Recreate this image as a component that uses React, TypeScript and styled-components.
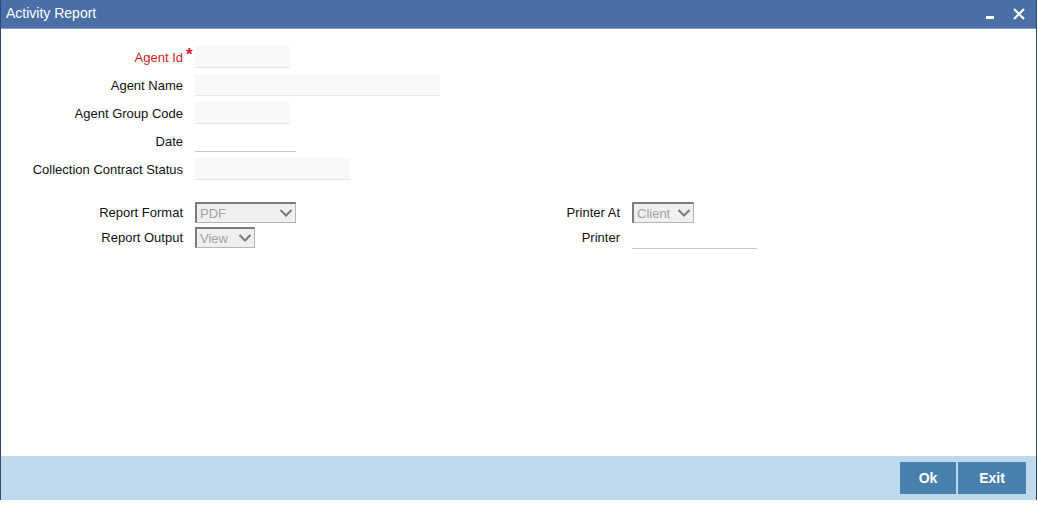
import styled, { createGlobalStyle } from "styled-components";

const GlobalStyle = createGlobalStyle`
  html, body {
    margin: 0;
    padding: 0;
    background: #ffffff;
  }
  body {
    font-family: "Liberation Sans", Arial, sans-serif;
    font-size: 13px;
    color: #000;
  }
`;

const Window = styled.div`
  width: 1035px;
  height: 500px;
  border-left: 1px solid #2c4b7b;
  border-right: 1px solid #2c4b7b;
  display: flex;
  flex-direction: column;
  background: #fff;
`;

const TitleBar = styled.div`
  height: 28px;
  background: #4a6fa6;
  border-bottom: 1px solid #8c9fae;
  display: flex;
  align-items: center;
  justify-content: space-between;
  padding: 0 10px 0 5px;
  color: #fff;
`;

const Title = styled.span`
  font-size: 14px;
  margin-top: -2px;
`;

const Controls = styled.div`
  display: flex;
  align-items: center;
  gap: 17px;
`;

const IconBtn = styled.span`
  display: flex;
  cursor: pointer;
`;

const Content = styled.div`
  flex: 1;
  padding-top: 14px;
`;

const FormGrid = styled.div`
  display: grid;
  grid-template-columns: 182px 1fr;
  grid-auto-rows: 28px;
  column-gap: 12px;
  align-items: center;
`;

const Label = styled.label<{ required?: boolean }>`
  position: relative;
  text-align: right;
  color: ${({ required }) => (required ? "#d21a2a" : "#111")};
  white-space: nowrap;
`;

const Star = styled.span`
  position: absolute;
  left: 100%;
  top: -5px;
  margin-left: 3px;
  color: #d21a2a;
  font-size: 17px;
  font-weight: bold;
`;

const TextBox = styled.div<{ w: number; plain?: boolean }>`
  width: ${({ w }) => w}px;
  height: 22px;
  box-sizing: border-box;
  background: ${({ plain }) => (plain ? "transparent" : "#f8f8f8")};
  border-bottom: 1px solid ${({ plain }) => (plain ? "#c8c8c8" : "#e6e6e6")};
`;

const ReportGrid = styled.div`
  margin-top: 17px;
  display: grid;
  grid-template-columns: 182px 325px 88px auto;
  grid-auto-rows: 25px;
  column-gap: 12px;
  align-items: center;
`;

const Select = styled.div<{ w: number }>`
  width: ${({ w }) => w}px;
  height: 21px;
  box-sizing: border-box;
  border: 1px solid #b4b4b4;
  border-top: 2px solid #7c7c7c;
  border-left: 2px solid #7c7c7c;
  background: #efefef;
  color: #a3a3a3;
  font-size: 13px;
  display: flex;
  align-items: center;
  justify-content: space-between;
  padding: 0 2px 0 3px;
`;

const Footer = styled.div`
  height: 44px;
  background: #bed9ec;
  display: flex;
  justify-content: flex-end;
  align-items: center;
  gap: 2px;
  padding-right: 10px;
`;

const Button = styled.button<{ w: number }>`
  width: ${({ w }) => w}px;
  height: 32px;
  border: none;
  background: #4a80ae;
  color: #fff;
  font-family: "Liberation Sans", Arial, sans-serif;
  font-weight: bold;
  font-size: 14px;
  cursor: pointer;
`;

const Chevron = () => (
  <svg width="14" height="10" viewBox="0 0 14 10">
    <path d="M1.5 2 L7 7.5 L12.5 2" fill="none" stroke="#7a7a7a" strokeWidth="2" />
  </svg>
);

const App = () => {
  return (
    <>
      <GlobalStyle />
      <Window>
        <TitleBar>
          <Title>Activity Report</Title>
          <Controls>
            <IconBtn>
              <svg width="10" height="10" viewBox="0 0 10 10">
                <rect x="1" y="7" width="8" height="3" fill="#fff" />
              </svg>
            </IconBtn>
            <IconBtn>
              <svg width="14" height="14" viewBox="0 0 14 14">
                <path d="M2 2 L12 12 M12 2 L2 12" stroke="#fff" strokeWidth="2.2" />
              </svg>
            </IconBtn>
          </Controls>
        </TitleBar>
        <Content>
          <FormGrid>
            <Label required>
              Agent Id<Star>*</Star>
            </Label>
            <TextBox w={95} />
            <Label>Agent Name</Label>
            <TextBox w={245} />
            <Label>Agent Group Code</Label>
            <TextBox w={95} />
            <Label>Date</Label>
            <TextBox w={101} plain />
            <Label>Collection Contract Status</Label>
            <TextBox w={155} />
          </FormGrid>
          <ReportGrid>
            <Label>Report Format</Label>
            <Select w={101}>
              PDF
              <Chevron />
            </Select>
            <Label>Printer At</Label>
            <Select w={62}>
              Client
              <Chevron />
            </Select>
            <Label>Report Output</Label>
            <Select w={60}>
              View
              <Chevron />
            </Select>
            <Label>Printer</Label>
            <TextBox w={125} plain />
          </ReportGrid>
        </Content>
        <Footer>
          <Button w={56}>Ok</Button>
          <Button w={68}>Exit</Button>
        </Footer>
      </Window>
    </>
  );
};

export default App;
